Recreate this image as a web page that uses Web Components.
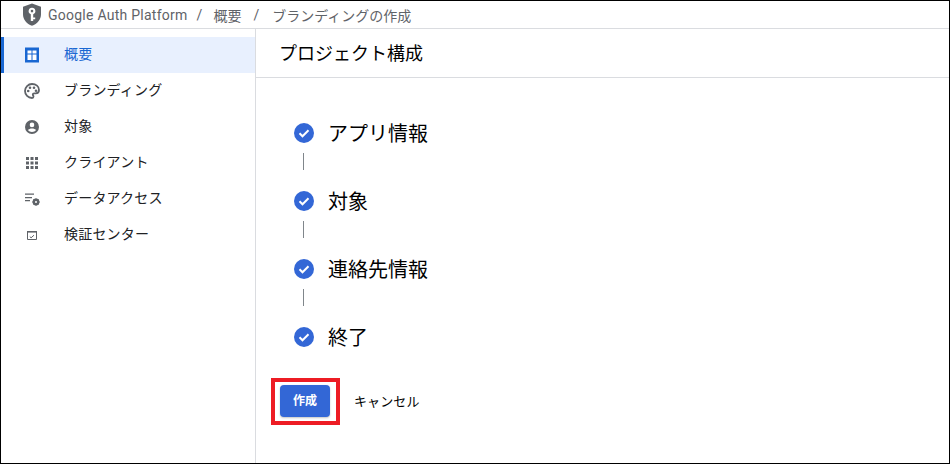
<!DOCTYPE html>
<html lang="ja">
<head>
<meta charset="utf-8">
<title>プロジェクト構成</title>
<style>
  html, body { margin: 0; padding: 0; background: #fff; }
  body { font-family: Roboto, "Noto Sans CJK JP", sans-serif; }
</style>
</head>
<body>
<app-shell>
  <top-bar slot="top">
    <span>Google Auth Platform</span>
    <span>概要</span>
    <span>ブランディングの作成</span>
  </top-bar>
  <side-nav slot="nav">
    <nav-item icon="overview" active>概要</nav-item>
    <nav-item icon="palette">ブランディング</nav-item>
    <nav-item icon="person">対象</nav-item>
    <nav-item icon="apps">クライアント</nav-item>
    <nav-item icon="data">データアクセス</nav-item>
    <nav-item icon="verify">検証センター</nav-item>
  </side-nav>
  <config-panel slot="main" heading="プロジェクト構成">
    <step-item>アプリ情報</step-item>
    <step-item>対象</step-item>
    <step-item>連絡先情報</step-item>
    <step-item last>終了</step-item>
    <form-actions slot="actions"></form-actions>
  </config-panel>
</app-shell>

<script>
const ICONS = {
  overview: '<rect x="2" y="2" width="14" height="14" fill="#fff"/><path fill="#1967d2" fill-rule="evenodd" d="M2 1.500h14v15H2zM4.500 4.500v3h4v-3zm5 0v3h4v-3zM4.500 8.500v5.500h4V8.500zm5 0v5.500h4V8.500z"/>',
  palette: '<path fill="none" stroke="#5f6368" stroke-width="1.800" d="M9 2a7 7 0 0 0 0 14c1 0 1.500-.7 1.500-1.400 0-.9-.7-1.200-.7-2 0-.8.600-1.300 1.400-1.300h1.500c1.900 0 3.300-1.400 3.300-3.300C16 4.500 13 2 9 2z"/><circle cx="5.200" cy="9" r="1.300" fill="#5f6368"/><circle cx="7" cy="5.800" r="1.300" fill="#5f6368"/><circle cx="11" cy="5.800" r="1.300" fill="#5f6368"/><circle cx="13" cy="8.800" r="1.300" fill="#5f6368"/>',
  person: '<path fill="#5f6368" fill-rule="evenodd" d="M9 2a7 7 0 1 1 0 14A7 7 0 0 1 9 2zm0 2.600a2.300 2.300 0 1 0 0 4.600 2.300 2.300 0 0 0 0-4.600zm0 5.900c-1.700 0-3.300.6-4.200 1.500a5.300 5.300 0 0 0 8.400 0c-.9-.9-2.500-1.500-4.200-1.500z"/>',
  apps: '<path fill="#5f6368" d="M3 3h3v3H3zM7.500 3h3v3h-3zM12 3h3v3h-3zM3 7.500h3v3H3zM7.500 7.500h3v3h-3zM12 7.500h3v3h-3zM3 12h3v3H3zM7.500 12h3v3h-3zM12 12h3v3h-3z"/>',
  data: '<path fill="#5f6368" d="M2 3.500h9v1.200H2zM2 7h7v1.200H2zM2 10h5v1.200H2z"/><circle cx="13" cy="12" r="2.200" fill="none" stroke="#5f6368" stroke-width="2.400"/><path stroke="#5f6368" stroke-width="1.500" d="M13 8.400v1.400M13 14.200v1.400M9.400 12h1.400M15.200 12h1.400M10.500 9.500l1 1M14.500 13.500l1 1M15.500 9.500l-1 1M11.500 13.500l-1 1"/>',
  verify: '<path fill="none" stroke="#5f6368" stroke-width="1" d="M4.500 5.500h9v8h-9z"/><path fill="#5f6368" d="M4 5h10v1.600H4z"/><path fill="none" stroke="#5f6368" stroke-width="1" d="M6.800 10.600l1.300 1.200 2.900-2.600"/>',
}

class AppShell extends HTMLElement {
  constructor() {
    super()
    this.attachShadow({ mode: 'open' }).innerHTML = `
      <style>
        :host {
          display: grid;
          grid-template-columns: 254px 1fr;
          grid-template-rows: 28px 1fr;
          width: 950px;
          height: 464px;
          box-sizing: border-box;
          border: 1px solid #000;
          background: #fff;
          overflow: hidden;
        }
        .top { grid-column: 1 / -1; }
      </style>
      <div class="top"><slot name="top"></slot></div>
      <slot name="nav"></slot>
      <slot name="main"></slot>
    `
  }
}

class TopBar extends HTMLElement {
  constructor() {
    super()
    this.attachShadow({ mode: 'open' }).innerHTML = `
      <style>
        :host {
          display: flex;
          align-items: center;
          height: 28px;
          box-sizing: border-box;
          padding-left: 22px;
          border-bottom: 1px solid #dadce0;
          color: #5f6368;
          font-size: 14px;
        }
        svg { width: 20px; height: 24px; margin-right: 5px; flex: none; }
        ::slotted(span) { display: inline-flex; align-items: center; }
        ::slotted(span:first-of-type) { letter-spacing: .25px; }
        ::slotted(span:not(:last-child))::after {
          content: "/";
          margin: 0 11px 0 9px;
        }
        ::slotted(span:nth-of-type(2))::after { margin: 0 13px 0 12px; }
      </style>
      <svg viewBox="0 0 20 24">
        <path fill="#5f6368" fill-rule="evenodd" d="M9 .500l9 3.200v7.500c0 5.200-3.700 9.800-9 11.600-5.300-1.800-9-6.400-9-11.600V3.700zm0 4.300a3.300 3.300 0 0 0-1.200 6.400v6.800h2.400v-1.700h2v-1.900h-2v-3.200A3.300 3.300 0 0 0 9 4.800zm0 2a1.300 1.300 0 1 1 0 2.600 1.300 1.300 0 0 1 0-2.600z"/>
      </svg>
      <slot></slot>
    `
  }
}

class SideNav extends HTMLElement {
  constructor() {
    super()
    this.attachShadow({ mode: 'open' }).innerHTML = `
      <style>
        :host {
          display: flex;
          flex-direction: column;
          box-sizing: border-box;
          padding-top: 8px;
          border-right: 1px solid #dadce0;
          width: 255px;
        }
      </style>
      <slot></slot>
    `
  }
}

class NavItem extends HTMLElement {
  constructor() {
    super()
    this.attachShadow({ mode: 'open' }).innerHTML = `
      <style>
        :host {
          display: flex;
          align-items: center;
          height: 36px;
          box-sizing: border-box;
          padding: 0 0 4px 19px;
          border-left: 3px solid transparent;
          color: #202124;
          font: 14px "Noto Sans CJK JP", sans-serif;
          letter-spacing: .2px;
        }
        :host([active]) {
          background: #e8f0fe;
          border-left-color: #1967d2;
          color: #1967d2;
        }
        svg { width: 18px; height: 18px; margin-right: 23px; flex: none; position: relative; top: 2px; }
      </style>
      <svg viewBox="0 0 18 18">${ICONS[this.getAttribute('icon')] || ''}</svg>
      <slot></slot>
    `
  }
}

class ConfigPanel extends HTMLElement {
  constructor() {
    super()
    this.attachShadow({ mode: 'open' }).innerHTML = `
      <style>
        :host { display: flex; flex-direction: column; min-width: 0; }
        h2 {
          margin: 0;
          height: 49px;
          box-sizing: border-box;
          display: flex;
          align-items: center;
          padding: 0 0 2px 24px;
          border-bottom: 1px solid #dadce0;
          color: #000;
          font: 400 18px "Noto Sans CJK JP", sans-serif;
        }
        .steps { padding: 45px 0 0 39px; display: flex; flex-direction: column; }
        .actions { padding: 38px 0 0 25px; }
      </style>
      <h2>${this.getAttribute('heading')}</h2>
      <div class="steps"><slot></slot></div>
      <div class="actions"><slot name="actions"></slot></div>
    `
  }
}

class StepItem extends HTMLElement {
  constructor() {
    super()
    this.attachShadow({ mode: 'open' }).innerHTML = `
      <style>
        :host {
          display: grid;
          grid-template-columns: 20px 1fr;
          column-gap: 14px;
          align-items: center;
          color: #000;
          font: 20px "Noto Sans CJK JP", sans-serif;
          height: 68px;
          grid-template-rows: 20px 1fr;
        }
        :host([last]) { height: 20px; }
        svg { width: 20px; height: 20px; display: block; }
        .line {
          grid-column: 1;
          align-self: start;
          width: 1px;
          height: 17px;
          margin: 10px 0 0 9px;
          background: #80868b;
        }
        :host([last]) .line { display: none; }
        .label { line-height: 20px; white-space: nowrap; }
      </style>
      <svg viewBox="0 0 20 20">
        <circle cx="10" cy="10" r="10" fill="#3367d6"/>
        <path fill="none" stroke="#fff" stroke-width="2" d="M5.500 10.300l3 3 6-6"/>
      </svg>
      <span class="label"><slot></slot></span>
      <span class="line"></span>
    `
  }
}

class FormActions extends HTMLElement {
  constructor() {
    super()
    this.attachShadow({ mode: 'open' }).innerHTML = `
      <style>
        :host {
          display: flex;
          align-items: center;
          gap: 24px;
          font: 13px "Noto Sans CJK JP", sans-serif;
          letter-spacing: .1px;
        }
        button {
          position: relative;
          width: 50px;
          height: 32px;
          padding: 0 0 3px;
          border: 0;
          border-radius: 4px;
          background: #3367d6;
          color: #fff;
          font: 700 12px "Noto Sans CJK JP", sans-serif;
          box-shadow: 0 1px 2px rgba(60, 64, 67, .3);
        }
        button::after {
          content: "";
          position: absolute;
          inset: -7px -10px -8px -9px;
          border: 4px solid #ed1c24;
        }
        .cancel { color: #000; padding-bottom: 2px; }
      </style>
      <button type="button">作成</button>
      <span class="cancel">キャンセル</span>
    `
  }
}

customElements.define('app-shell', AppShell)
customElements.define('top-bar', TopBar)
customElements.define('side-nav', SideNav)
customElements.define('nav-item', NavItem)
customElements.define('config-panel', ConfigPanel)
customElements.define('step-item', StepItem)
customElements.define('form-actions', FormActions)
</script>
</body>
</html>
